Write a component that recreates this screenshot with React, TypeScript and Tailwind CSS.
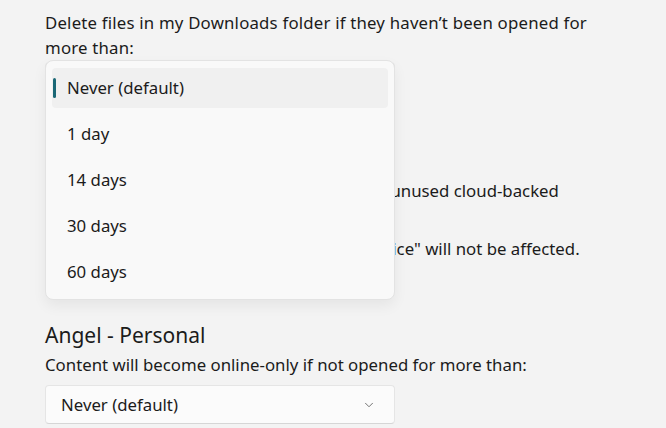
import { ChevronDown } from 'lucide-react';

const options = ['Never (default)', '1 day', '14 days', '30 days', '60 days'];

function DropdownPopup() {
  return (
    <div className="absolute left-0 top-[-2px] w-[350px] rounded-[8px] border border-[#e3e3e3] bg-[#f9f9f9] px-[6px] pb-[7px] pt-[7px] shadow-[0_6px_14px_rgba(0,0,0,0.06)]">
      <ul className="flex flex-col gap-[6px]">
        {options.map((opt, i) => (
          <li
            key={opt}
            className={
              'relative flex h-[40px] items-center rounded-[4px] pl-[15px] text-[16.8px] text-[#1b1b1b] ' +
              (i === 0 ? 'bg-[#f0f0f0]' : '')
            }
          >
            {i === 0 && (
              <span className="absolute left-[1px] top-[10px] h-[20px] w-[3px] rounded-full bg-[#1b6876]" />
            )}
            {opt}
          </li>
        ))}
      </ul>
    </div>
  );
}

export default function App() {
  return (
    <div
      className="h-[428px] w-[666px] overflow-hidden bg-[#f3f3f3] pl-[45px] text-[#1b1b1b]"
      style={{ fontFamily: '"Noto Sans", "Segoe UI", sans-serif' }}
    >
      <p className="pt-[10px] text-[16.8px] leading-[25px] tracking-[0.2px]">
        Delete files in my Downloads folder if they haven’t been opened for
        <br />
        more than:
      </p>

      <div className="relative">
        {/* covered by the open dropdown */}
        <div className="mt-[2px] flex h-[40px] w-[350px] items-center justify-between rounded-[4px] border border-[#e5e5e5] bg-[#fbfbfb] px-[15px] text-[16.8px]">
          Never (default)
        </div>
        <h2 className="mt-[33px] text-[21px] leading-[33px]">Cloud content</h2>
        <div className="mt-[10px] text-[16.8px] leading-[25px]">
          <p className="whitespace-nowrap">Storage Sense can free up space by making unused cloud-backed</p>
          <p className="whitespace-nowrap">content available online-only.</p>
          <p className="mt-[8px] whitespace-nowrap">
            Content marked as "Always keep on this device" will not be affected.
          </p>
        </div>

        <h2 className="mt-[58px] text-[21px] leading-[33px]">Angel - Personal</h2>
        <p className="text-[16.8px] leading-[25px]">
          Content will become online-only if not opened for more than:
        </p>
        <div className="mt-[8px] flex h-[39px] w-[350px] items-center justify-between rounded-[4px] border border-[#e5e5e5] border-b-[#d6d6d6] bg-[#fbfbfb] pl-[15px] pr-[18px] text-[16.8px]">
          <span>Never (default)</span>
          <ChevronDown className="h-[14px] w-[14px] text-[#5f5f5f]" strokeWidth={1.5} />
        </div>

        <DropdownPopup />
      </div>
    </div>
  );
}
